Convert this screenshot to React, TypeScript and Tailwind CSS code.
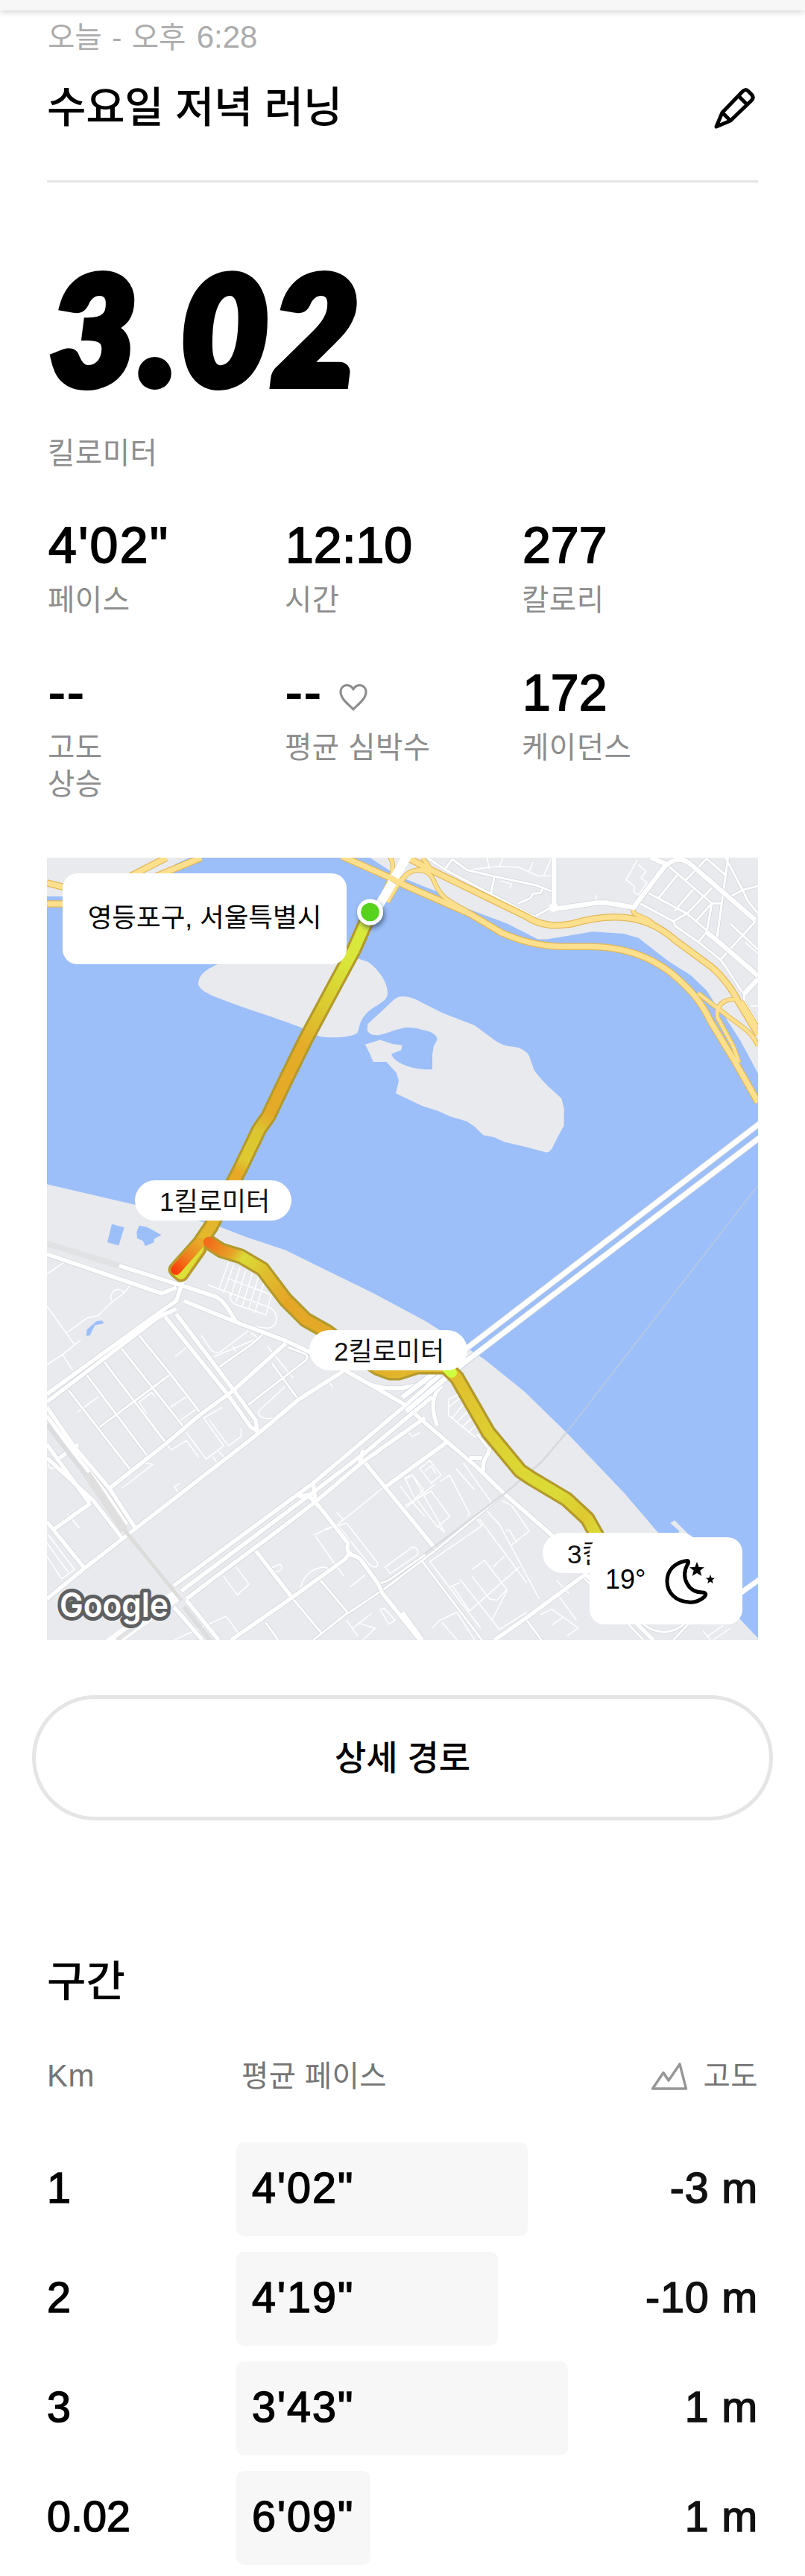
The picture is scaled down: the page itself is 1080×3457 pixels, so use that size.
import type { ReactNode } from 'react'

const splits = [
  { km: '1', pace: `4'02"`, width: 391, elevation: '-3 m' },
  { km: '2', pace: `4'19"`, width: 351, elevation: '-10 m' },
  { km: '3', pace: `3'43"`, width: 445, elevation: '1 m' },
  { km: '0.02', pace: `6'09"`, width: 180, elevation: '1 m' },
]

// street geometry, in tile units (north and south tiles have their own scale)
const northStreets = [
  'M2080 32V225',
  'M2080 232L2250 208H2290L2400 226L2530 60',
  'M2470 32L2535 58C2570 32 2600 32 2635 62L2890 275',
  'M2690 320L2730 350L2901 492',
  'M2901 505L2845 562',
]

const northLanes = [
  'M1570 32L1640 78L2000 262L2060 230',
  'M1670 38L1640 78M1670 38L1730 80L1840 105L2010 140L2075 165M1840 105L1825 178',
  'M2035 150L2025 170L1995 172L1985 190L1935 210',
  'M2425 210L2560 280L2570 300L2660 360L2750 430C2790 480 2810 520 2845 565V592L2901 680',
  'M2460 170L2615 250L2700 320',
  'M2535 60L2715 210H2755M2575 100L2500 190M2640 155L2565 240M2715 150L2615 250L2560 280M2715 210L2650 280',
  'M2715 210L2695 320L2660 362M2780 32L2755 210L2735 350M2770 32L2840 160L2860 200L2901 250',
  'M2901 142L2840 158L2780 188M2690 32L2770 100M2695 35L2610 120M2890 280L2750 430M2790 290L2901 390',
]

const northPaths = [
  'M1730 80L1860 65L1940 70L2015 103H2070M1810 32L1820 75M1875 32L1860 65M2070 32L2038 103M1995 50L1980 85',
  'M2415 40L2370 118L2405 145L2400 165L2420 177L2455 130L2430 110L2450 85L2420 60',
  'M2250 178V205M1865 122L1910 135L1900 153M2850 362L2901 405M2871 610H2901',
]

const highways = [
  'M39 130L110 148M39 212H110M520 32L375 104M660 32L470 108',
  'M1490 32L1580 78L1970 262C2030 300 2090 300 2150 290C2230 268 2330 252 2420 275C2480 290 2520 315 2570 355L2710 455C2760 495 2800 550 2820 590L2901 720',
  'M1225 26L1420 110L1480 140L1740 250L1870 325C1950 360 2030 377 2110 378H2230C2370 380 2470 420 2550 480C2630 545 2670 590 2710 670L2810 830L2901 985',
]

const ramps = [
  'M1470 122C1490 72 1570 62 1595 120C1620 180 1640 195 1730 240',
  'M1550 32L1585 78M1415 20C1450 70 1420 110 1405 150L1385 195M1560 80C1500 75 1480 100 1455 130L1410 205',
  'M2398 235C2398 265 2460 258 2485 298',
  'M2660 560L2780 650C2860 705 2880 720 2901 765',
  'M2815 586C2760 578 2730 612 2738 655L2800 765L2825 830M2835 592L2901 695',
]

const southStreets = [
  'M39 65L500 212L560 190M330 108L590 185L720 225C760 245 775 285 800 318',
  'M590 240L800 320L1000 390L1090 430L1240 502L1340 555L1470 625L1650 770L1770 865L1880 965L2070 1120L2210 1270L2420 1460L2480 1515',
  'M585 170L560 240L490 285L39 590M560 270L490 300L39 620',
  'M515 300L765 590L860 715L890 730M560 290L790 575L880 690L885 735',
  'M1230 505L1050 612L890 738L390 1100L190 1245L39 1360',
  'M1000 400L785 580L655 668L520 775L290 945',
  'M39 640L150 790L290 945L395 1095M39 672L130 790L270 955L360 1080M39 780L210 1000M39 830L225 990L340 1130',
  'M39 1070L190 1245M215 1000L65 1100M165 780L90 830',
  'M1620 520L1480 635L1110 925L550 1310M1590 600L1320 810L1110 960L580 1330M1560 680L1310 845L1120 995L960 1110L720 1275L600 1360',
  'M1110 920L1120 1000L1090 970L1050 975M1310 800L1300 850',
  'M1320 850L1400 940L1600 1170M1120 995L1250 1150C1240 1200 1270 1190 1300 1210L1370 1300L1390 1340L1540 1515',
  'M1650 770L1400 940M880 1180L1025 1355M780 1515L1025 1355L1240 1210L1260 1180',
  'M2210 1265L1970 1430L1840 1515M600 1365L730 1515M550 1390L665 1515M1470 1020L1600 1170M1470 1410L1550 1515',
  'M1340 555C1420 580 1520 570 1600 530M1630 560C1580 590 1590 660 1610 710M1740 830H1790M1820 790C1820 830 1790 820 1795 880',
]

const southLanes = [
  'M410 370L540 520L660 665M340 420L590 715M270 470L515 770M200 520L445 825M125 575L375 875M530 520L250 715',
  'M945 475L1050 610M1010 415L1080 440Q1095 455 1075 468L850 630M730 490L860 405L910 365',
  'M1025 1355L1145 1490M1140 1290L1250 1412M1250 1412L1110 1515M1250 1415L1400 1320L1600 1180L1880 965M1370 1290C1360 1310 1400 1300 1430 1280L1560 1195',
  'M920 1450L970 1515M1550 1220L1790 1515M1970 1440L2030 1515M2190 1270L2440 1515M1770 740L1820 800',
  'M2440 1455C2500 1500 2560 1490 2610 1450M2560 1515L2620 1455',
]

const southPaths = [
  'M39 140L108 95M39 260L150 405L175 388M118 360L200 305L245 295L300 245L345 215L375 182M300 240A28 28 0 1 1 350 212M39 480L102 442L142 500M102 442L150 405',
  'M770 95L730 200M790 105L750 210M815 115L778 225M840 125L800 245M865 138L825 260M890 150L850 272M915 165L875 285M945 205L920 295M765 155L935 215M685 180L945 268M775 215C775 260 800 250 925 295',
  'M935 265C975 285 970 340 930 342L830 335M660 370L700 425Q720 440 740 430L850 352M785 410L800 430M860 360L890 380L710 450',
  'M160 660L245 600M535 640L600 600M575 690L650 640M410 620L460 585L475 600M410 620L440 665M525 785L540 800L600 765L650 828M600 735L680 835L750 785L670 680L745 640M690 685L770 785L820 750L820 720M705 825L725 850M730 805L755 830',
  'M340 945L465 855L435 850M550 935L570 965M550 940L575 925M122 1040L170 1095M45 1120L150 1250L98 1285L39 1200M39 1150L125 1260M50 850C30 870 80 880 75 850',
  'M1395 940L1210 1080L1165 1100M1120 1125L1195 1225L1235 1275M1115 1120L1190 1085M1245 1075L1370 1225Q1370 1250 1340 1235L1210 1085L1245 1075M1205 1035L1235 1065',
  'M1060 1320C1070 1260 1140 1230 1170 1245M750 1275L805 1345L852 1305L800 1240M940 1245L975 1230Q995 1240 975 1255L945 1262M1260 1315L1320 1270',
  'M1400 1240L1510 1165Q1540 1170 1530 1195L1420 1265ZM1480 905L1510 895L1555 950L1520 985ZM1460 935L1500 985L1560 1050M1480 1020L1600 930',
  'M1380 1400L1395 1395L1440 1440L1415 1455ZM1245 1440L1290 1500M1270 1470L1345 1415M1290 1450L1360 1470L1310 1515M550 1515L760 1425L810 1490',
  'M1655 610L1700 590M1655 610V670L1760 750L1790 740M1655 640L1720 590M1670 680L1740 600M1690 695L1750 640M1710 715L1765 665M1735 735L1785 690',
  'M1540 870L1580 840L1625 895L1585 925ZM1560 880L1585 860L1605 890M1480 910L1510 895L1640 1110M1620 920L1660 895L1740 1040L1730 1050M1715 850L1830 1000M1685 870L1760 950M1480 1010L1585 955L1660 1050L1610 1090L1530 990M1640 1110L1610 1085',
  'M1870 990L1910 1010L1980 1105L1905 1160M1885 1105L1900 1100L1930 1150M1780 1060L1970 1300M1810 1030L1860 1080L2020 1360M1580 1220L1790 1085L1770 1060M1580 1220L1785 1470',
  'M1750 1250L1800 1215L1890 1325L1850 1365L1820 1360L1750 1275M1660 1315L1700 1300M1670 1310L1740 1405L1940 1240M1700 1285L1860 1475L1970 1410M1880 1200L1835 1240M1890 1330L1830 1440',
  'M2025 1420L2070 1398L2178 1470L2130 1500M2070 1460L2115 1430M1590 1470L1620 1440L1690 1410L1760 1515M1630 1450L1690 1515M2100 1350L2170 1440M2090 1290L2140 1340',
  'M890 655L1000 560M890 655Q890 690 960 680L1010 640M925 410L1030 530M1170 540L1190 565M555 450L600 415M1490 730L1510 750L1540 735',
  'M2700 1500L2760 1460M2720 1515L2790 1470M2680 1480L2710 1515',
]

function Stat({ value, label, icon, wide }: { value: string; label: string; icon?: ReactNode; wide?: boolean }) {
  return (
    <div className="h-[198px]">
      <div className="flex h-20 items-center pl-[2px] text-[68px] leading-[80px] whitespace-nowrap text-black [-webkit-text-stroke:1.8px_#000]">
        <span className={wide ? 'tracking-[2.4px]' : ''}>{value}</span>
        {icon}
      </div>
      <div className="mt-[10px] pl-px text-[39.5px] leading-[49px] tracking-[0.5px] whitespace-pre-line text-[#8d8d8d]">{label}</div>
    </div>
  )
}

function PencilIcon() {
  return (
    <svg className="h-20 w-20" viewBox="0 0 80 80" fill="none" stroke="#000" strokeWidth="5" strokeLinejoin="round" strokeLinecap="round">
      <path d="M17 68L25 49L52 21Q56 16.500 60 20.500L64.500 25Q68 29 64 33L36 60Z" />
      <path d="M47 27L58 38M26 50L34 58" />
    </svg>
  )
}

function HeartIcon() {
  return (
    <svg className="mt-[14px] ml-[20px] h-[40px] w-[42px]" viewBox="0 0 42 40" fill="none" stroke="#8d8d8d" strokeWidth="3.2" strokeLinejoin="round">
      <path d="M21 36C17 31 4 23 4 12.500C4 3 16 0 21 9C26 0 38 3 38 12.500C38 23 25 31 21 36Z" />
    </svg>
  )
}

function ElevationIcon() {
  return (
    <svg className="h-[40px] w-[52px]" viewBox="0 0 52 40" fill="none" stroke="#969696" strokeWidth="3.4" strokeLinejoin="round">
      <path d="M3.500 37H48.500L40 4L25 26L18 15.500Z" />
    </svg>
  )
}

function MoonIcon() {
  return (
    <svg className="h-[64px] w-[70px]" viewBox="0 0 70 64" fill="none">
      <path
        d="M27 5C33 3 32 7 30 10C21 28 32 47 50 47C55 47 56 50 53 53C46 59 40 61 32 60C14 59 3 47 3 32C3 18 12 8 27 5Z"
        stroke="#000"
        strokeWidth="5"
        strokeLinejoin="round"
      />
      <path d="M43 6L45.700 13L53 13.300L47.300 17.800L49.300 25L43 21L36.700 25L38.700 17.800L33 13.300L40.300 13Z" fill="#000" />
      <path d="M61 23L62.600 27.400L67 27.700L63.500 30.500L64.800 35L61 32.400L57.200 35L58.500 30.500L55 27.700L59.400 27.400Z" fill="#000" />
    </svg>
  )
}

function Streets({ paths, width, casing }: { paths: string[]; width: number; casing?: number }) {
  const d = paths.join('')
  return (
    <>
      {casing && <path d={d} stroke="#d3d6da" strokeWidth={casing} vectorEffect="non-scaling-stroke" />}
      <path d={d} stroke="#fff" strokeWidth={width} vectorEffect="non-scaling-stroke" />
    </>
  )
}

const legOne = 'M497 1224L475 1274L447 1326L410 1395L383 1450L360 1498L348 1515L322 1569L307 1598L283 1646L268 1668L236 1704L243 1710L267 1676'
const legTwo = 'M280 1667L297 1678L323 1686L352 1703L383 1744L410 1771L440 1788L470 1812L507 1836L523 1842L535 1842L560 1834L598 1834L613 1849L655 1922L698 1974L713 1984L760 2012L788 2038L806 2070'

function Map() {
  return (
    <svg className="block h-[1050px] w-[954px]" viewBox="63 1151 954 1050" fill="none">
      <defs>
        <linearGradient id="legOne" gradientUnits="userSpaceOnUse" x1="497" y1="1224" x2="265" y2="1670">
          <stop offset="0" stopColor="#d8ee3c" />
          <stop offset="0.150" stopColor="#d9e53a" />
          <stop offset="0.300" stopColor="#dcc52f" />
          <stop offset="0.400" stopColor="#e4ac28" />
          <stop offset="0.600" stopColor="#e5aa27" />
          <stop offset="0.660" stopColor="#dbc631" />
          <stop offset="0.740" stopColor="#dfca31" />
          <stop offset="0.780" stopColor="#e6a826" />
          <stop offset="1" stopColor="#e2bb2c" />
        </linearGradient>
        <linearGradient id="legTwo" gradientUnits="userSpaceOnUse" x1="280" y1="1667" x2="805" y2="2060">
          <stop offset="0" stopColor="#f36d1a" />
          <stop offset="0.050" stopColor="#e6a226" />
          <stop offset="0.075" stopColor="#dbdb38" />
          <stop offset="0.130" stopColor="#dfbf2e" />
          <stop offset="0.200" stopColor="#e5a627" />
          <stop offset="0.400" stopColor="#e3ad29" />
          <stop offset="0.600" stopColor="#e0c22e" />
          <stop offset="0.750" stopColor="#dcd533" />
          <stop offset="0.880" stopColor="#dcdb36" />
          <stop offset="0.950" stopColor="#dfc830" />
          <stop offset="1" stopColor="#dade38" />
        </linearGradient>
        <linearGradient id="turn" gradientUnits="userSpaceOnUse" x1="268" y1="1668" x2="234" y2="1706">
          <stop offset="0" stopColor="#e8a827" />
          <stop offset="0.500" stopColor="#ee7f1d" />
          <stop offset="1" stopColor="#fb3f0c" />
        </linearGradient>
        <filter id="pinShadow" x="-50%" y="-50%" width="200%" height="200%">
          <feDropShadow dx="2" dy="4" stdDeviation="3" floodColor="#1f3350" floodOpacity="0.600" />
        </filter>
      </defs>

      <rect x="63" y="1151" width="954" height="1050" fill="#9dbff9" />

      <g transform="translate(50 1140) scale(0.33333 0.34435)">
        <g fill="#e8eaee">
          <path d="M39 20H640L560 55L505 92L300 183H39Z" />
          <path d="M1320 20L1415 80L1470 110L1610 165L1730 230L1890 288L2015 350H2050L2235 320L2360 328L2420 345L2540 435L2630 490L2695 550L2730 605L2770 655L2830 745L2910 890V20Z" />
          <path d="M725 447C690 465 650 480 648 525C660 560 720 575 800 605C900 640 1000 670 1070 697L1135 728C1200 738 1270 730 1288 715C1300 690 1295 670 1320 645C1350 605 1410 600 1410 560C1410 510 1360 455 1330 438L1290 425L1200 400Z" />
          <path d="M1470 573Q1500 570 1545 595L1630 637L1760 685L1820 728Q1860 760 1890 765L1935 772Q1970 785 1980 805L2000 860Q2030 900 2070 935L2110 970L2120 1010V1075L2095 1120L2070 1168Q2060 1182 2045 1180L1970 1160L1880 1140L1840 1122L1795 1113L1760 1080L1730 1060L1660 1040L1610 1018L1550 1000L1443 950L1455 900L1445 870L1405 828H1352L1338 795L1320 760L1380 742L1430 758L1468 762L1465 782L1425 797Q1435 830 1510 850Q1560 860 1590 857V800L1595 768L1610 740Q1605 712 1550 703Q1510 692 1480 694Q1440 702 1400 717Q1345 735 1328 705L1330 680L1375 640L1430 590Q1450 572 1470 573Z" />
        </g>
        <Streets paths={northPaths} width={1.5} />
        <Streets paths={northLanes} width={3} casing={4.5} />
        <Streets paths={northStreets} width={6.5} casing={8} />
        <circle cx="2078" cy="226" r="18" fill="#fff" />
        <path d={ramps.join('')} stroke="#e3b85a" strokeWidth="6.500" vectorEffect="non-scaling-stroke" />
        <path d={highways.join('')} stroke="#e3b85a" strokeWidth="9.500" vectorEffect="non-scaling-stroke" />
        <path d={ramps.join('')} stroke="#fde08e" strokeWidth="4.500" vectorEffect="non-scaling-stroke" />
        <path d={highways.join('')} stroke="#fde08e" strokeWidth="7" vectorEffect="non-scaling-stroke" />
        <path d="M1488 26L1440 108M1430 128L1350 260" stroke="#fff" strokeWidth="12" vectorEffect="non-scaling-stroke" />
      </g>

      <g transform="translate(50 1660) scale(0.33333 0.35714)">
        <path d="M39 -198L390 -122L640 -63L730 -40L840 0L1000 50L1120 105L1350 210L1560 315L1620 350L1800 460L1960 580L2130 735L2360 960L2500 1112L2901 1508V1530H39Z" fill="#e8eaee" />
        <path d="M2548 1075L2585 1105L2570 1125L2700 1180L2640 1135L2565 1065Z" fill="#e8eaee" />
        <g fill="#9dbff9">
          <path d="M300 -48L350 -36L328 32L282 20Z" />
          <path d="M410 -43L440 -38L500 -8L470 8V20L435 34L425 15L402 5L400 -18Z" />
          <path d="M197 372L200 348L222 330L240 316L262 314L268 325L250 328L232 332L222 350L212 370Z" />
        </g>
        <path d="M39 25L330 108" stroke="#e1e2e3" strokeWidth="8" vectorEffect="non-scaling-stroke" />
        <Streets paths={southPaths} width={1.5} />
        <Streets paths={southLanes} width={3} casing={4.5} />
        <Streets paths={southStreets} width={5.5} casing={7} />
        <path d="M290 1530L570 1340" stroke="#fff" strokeWidth="15" vectorEffect="non-scaling-stroke" />
        <path d="M39 705L200 900M590 1390L700 1520" stroke="#dcdddf" strokeWidth="6" vectorEffect="non-scaling-stroke" />
        <path d="M200 890L350 1100" stroke="#dfdfe0" strokeWidth="11" vectorEffect="non-scaling-stroke" />
        <path d="M350 1100L580 1365" stroke="#dcdcdb" strokeWidth="5" vectorEffect="non-scaling-stroke" />
        <path d="M320 1515L400 1460" stroke="#e2e2e2" strokeWidth="6" vectorEffect="non-scaling-stroke" />
        <path d="M2820 1345L2910 1285" stroke="#fff" strokeWidth="7" vectorEffect="non-scaling-stroke" />
        <path d="M2740 0L2130 735L2030 845L1880 965" stroke="#b4c7e6" strokeWidth="2" vectorEffect="non-scaling-stroke" />
        <path d="M2130 735L2030 845L1880 965L1560 1190" stroke="#d9dadd" strokeWidth="2.500" vectorEffect="non-scaling-stroke" />
      </g>
      <path d="M1017 1591L963 1660" stroke="#b4c7e6" strokeWidth="2" />

      <path d="M1024 1504L628 1808L540 1875M1024 1523L620 1831L545 1894" stroke="#c5cfdc" strokeWidth="8.500" />
      <path d="M1024 1504L628 1808L540 1875M1024 1523L620 1831L545 1894" stroke="#fff" strokeWidth="7" />

      <g strokeLinejoin="round" strokeLinecap="round">
        <path d={legOne} stroke="#b39a2c" strokeWidth="21" />
        <path d={legTwo} stroke="#b39a2c" strokeWidth="21" />
        <path d={legOne} stroke="url(#legOne)" strokeWidth="14.500" />
        <path d="M236 1704L243 1710L266 1676" stroke="#dde036" strokeWidth="13" />
        <path d="M268 1668L236 1704" stroke="url(#turn)" strokeWidth="14" />
        <path d={legTwo} stroke="url(#legTwo)" strokeWidth="14.500" />
        <path d="M598 1834L606 1842" stroke="#ceff3f" strokeWidth="14" />
      </g>

      <circle cx="496.500" cy="1224" r="17.500" fill="#fff" filter="url(#pinShadow)" />
      <circle cx="496.500" cy="1224" r="12.300" fill="#57d31c" />

      <text
        x="80"
        y="2170"
        className="font-['Inter'] text-[45px] font-semibold"
        fill="#fff"
        stroke="#5f6062"
        strokeWidth="10"
        strokeLinejoin="round"
        paintOrder="stroke"
        textLength="146"
        lengthAdjust="spacingAndGlyphs"
      >
        Google
      </text>
    </svg>
  )
}

function RouteMap() {
  const pill = 'absolute flex h-[54px] items-center rounded-full bg-white pt-1 pl-[33px] text-[35px] whitespace-nowrap text-[#111]'
  return (
    <div className="relative mt-16 h-[1050px] w-[954px] overflow-hidden">
      <Map />
      <div className="absolute top-[21px] left-[21px] flex h-[122px] w-[381px] items-center justify-center rounded-[20px] bg-white text-[35.5px] whitespace-nowrap text-black">
        영등포구, 서울특별시
      </div>
      <div className={`${pill} top-[433px] left-[118px] w-[210px]`}>1킬로미터</div>
      <div className={`${pill} top-[634px] left-[352px] w-[212px]`}>2킬로미터</div>
      <div className={`${pill} top-[906px] left-[665px] w-[212px]`}>3킬로미터</div>
      <div className="absolute top-[912px] left-[728px] flex h-[117px] w-[205px] items-center rounded-[20px] bg-white pl-[21px] text-[36px] text-black">
        <span className="-mt-1 w-[80px]">19°</span>
        <MoonIcon />
      </div>
    </div>
  )
}

function SplitTable() {
  return (
    <section>
      <h2 className="mt-[176px] text-[57px] leading-[80px] font-medium text-black">구간</h2>
      <div className="mt-[62px] flex h-[50px] items-center text-[39.5px] leading-[50px] tracking-[0.4px] text-[#757575]">
        <span className="w-[261px] text-[42px]">Km</span>
        <span>평균 페이스</span>
        <span className="ml-auto flex items-center gap-[20px]">
          <ElevationIcon />
          고도
        </span>
      </div>
      <div className="mt-16 flex flex-col gap-[21px] text-[57.5px]">
        {splits.map((split) => (
          <div key={split.km} className="flex h-[126px] items-center">
            <span className="w-[254px] pb-[3px] text-black [-webkit-text-stroke:1.5px_#000]">{split.km}</span>
            <div
              className="flex h-full items-center rounded-[10px] bg-[#f7f7f7] pb-[3px] pl-[21px] tracking-[2px] text-black [-webkit-text-stroke:1.5px_#000]"
              style={{ width: split.width }}
            >
              {split.pace}
            </div>
            <span className="ml-auto pb-[3px] tracking-[0.8px] text-[#111] [-webkit-text-stroke:1.5px_#111]">{split.elevation}</span>
          </div>
        ))}
      </div>
    </section>
  )
}

export default function App() {
  return (
    <div className="h-[3457px] w-[1080px] overflow-hidden bg-white font-['Liberation_Sans','Noto_Sans_CJK_KR',sans-serif]">
      <div className="h-[14px] bg-[#f7f7f7] shadow-[0_1px_10px_rgba(0,0,0,0.22)]" />

      <main className="px-[63px]">
        <p className="mt-[6px] pl-px text-[42px] leading-[60px] [word-spacing:2.5px] text-[#acacac]">
          <span className="text-[39.5px]">오늘 - 오후</span> 6:28
        </p>
        <div className="mt-6 flex h-20 items-center justify-between">
          <h1 className="text-[57px] leading-[80px] font-medium tracking-[-0.3px] text-black">수요일 저녁 러닝</h1>
          <div className="-mt-[5px] -mr-[7px]">
            <PencilIcon />
          </div>
        </div>
        <div className="mt-[58px] h-[3px] bg-[#e5e5e5]" />

        <p className="mt-[94px] pl-[4px] font-['Lato'] text-[200px] leading-[200px] font-black tracking-[6px] text-black italic [-webkit-text-stroke:12px_#000]">
          3.02
        </p>
        <p className="mt-[44px] pl-px text-[39.5px] leading-[50px] tracking-[0.5px] text-[#8d8d8d]">킬로미터</p>

        <div className="mt-[58px] grid grid-cols-3">
          <Stat value={`4'02"`} label="페이스" wide />
          <Stat value="12:10" label="시간" />
          <Stat value="277" label="칼로리" />
          <Stat value="--" label={'고도\n상승'} wide />
          <Stat value="--" label="평균 심박수" icon={<HeartIcon />} wide />
          <Stat value="172" label="케이던스" />
        </div>

        <RouteMap />

        <button className="mt-[74px] -ml-5 flex h-[168px] w-[994px] items-center justify-center rounded-full border-[5px] border-[#e5e5e5] text-[46px] font-medium text-black">
          상세 경로
        </button>

        <SplitTable />
      </main>
    </div>
  )
}
